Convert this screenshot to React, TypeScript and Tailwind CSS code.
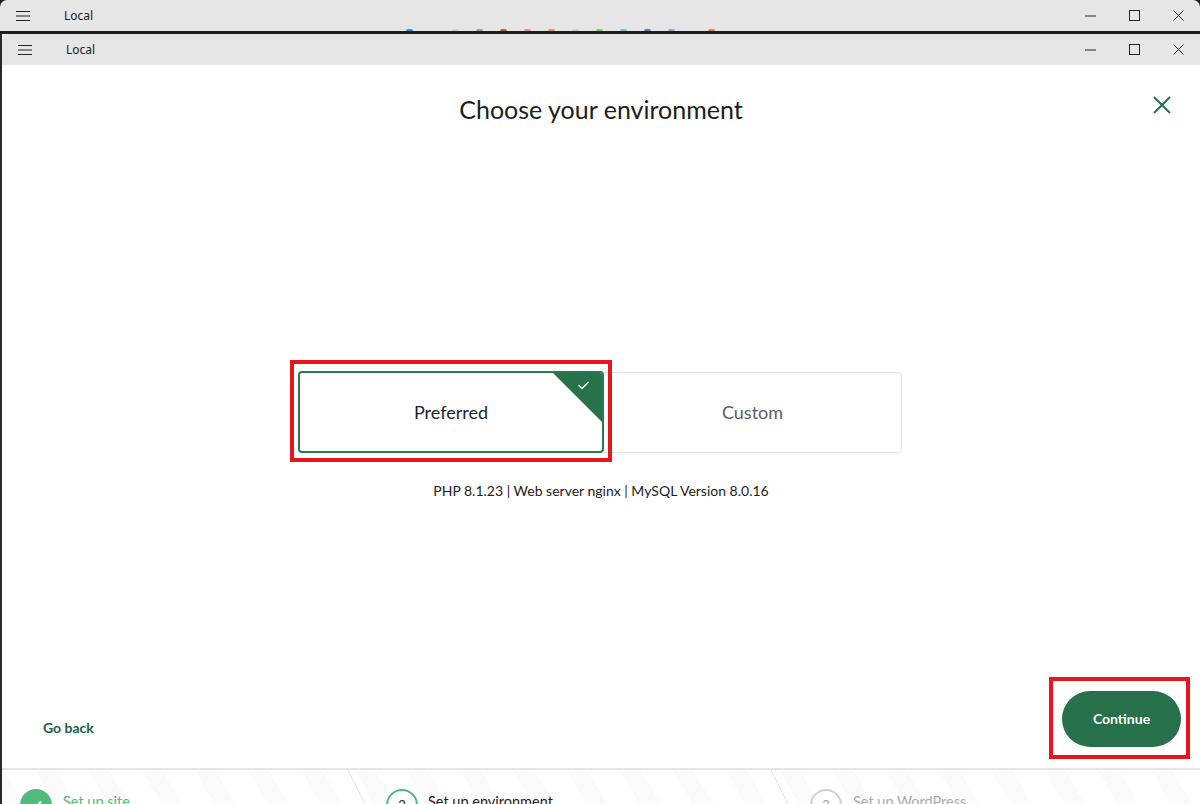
import React from "react";

const GREEN = "#26724a";

function TitleBar({ inner }: { inner?: boolean }) {
  return (
    <div
      className={`flex items-center h-[31px] bg-[#e6e6e6] ${inner ? "rounded-tl-[6px]" : "rounded-t-[7px]"} font-['Noto_Sans',sans-serif]`}
    >
      <div className="w-[44px] flex justify-center pl-[1px]">
        <svg width="14" height="10" viewBox="0 0 14 10">
          <path d="M0 0.5H14M0 5H14M0 9.5H14" stroke="#222" strokeWidth="1" />
        </svg>
      </div>
      <span className="ml-[20px] text-[12px] text-[#1a1a1a]">Local</span>
      <div className="ml-auto flex items-center">
        <div className="w-[44px] flex justify-center">
          <svg width="11" height="11" viewBox="0 0 11 11">
            <path d="M0 6H11" stroke="#222" strokeWidth="1" />
          </svg>
        </div>
        <div className="w-[44px] flex justify-center">
          <svg width="11" height="11" viewBox="0 0 11 11">
            <rect x="0.5" y="0.5" width="10" height="10" fill="none" stroke="#222" strokeWidth="1" />
          </svg>
        </div>
        <div className="w-[44px] flex justify-center">
          <svg width="11" height="11" viewBox="0 0 11 11">
            <path d="M0.5 0.5L10.5 10.5M10.5 0.5L0.5 10.5" stroke="#222" strokeWidth="1" />
          </svg>
        </div>
      </div>
    </div>
  );
}

function Chevron() {
  return (
    <svg className="absolute right-0 top-0" width="22" height="36" viewBox="0 0 22 36">
      <path d="M1 0L19 36" stroke="#e3e3e3" strokeWidth="1" fill="none" />
    </svg>
  );
}

const dots = [
  { x: 406, c: "#3b8fd0" },
  { x: 452, c: "#cfcfcf" },
  { x: 476, c: "#9a9a9a" },
  { x: 500, c: "#a06a4a" },
  { x: 524, c: "#e58bb5" },
  { x: 548, c: "#e0a020" },
  { x: 572, c: "#d8d0a8" },
  { x: 596, c: "#8cc83c" },
  { x: 620, c: "#78c0d0" },
  { x: 644, c: "#5c7fa8" },
  { x: 668, c: "#a8a0d0" },
  { x: 708, c: "#e08040" },
];

export default function App() {
  return (
    <div className="w-[1200px] h-[804px] overflow-hidden flex flex-col bg-[#1e1e1e] font-['Lato',sans-serif]">
      <TitleBar />
      <div className="relative h-[3px] bg-[#1e1e1e]">
        {dots.map((d) => (
          <span
            key={d.x}
            className="absolute top-[-2px] w-[7px] h-[2px] rounded-t-full"
            style={{ left: d.x, backgroundColor: d.c }}
          />
        ))}
      </div>
      <div className="flex-1 flex">
        <div className="w-[2px] bg-[#2a2a2a]" />
        <div className="flex-1 flex flex-col bg-white">
          <TitleBar inner />
          <main className="flex-1 flex flex-col">
            <div className="relative pt-[30px] flex justify-center">
              <h1 className="text-[25px] leading-[28px] text-[#1c1c1c]">
                Choose your environment
              </h1>
              <button className="absolute right-[28px] top-[30px] w-[20px] h-[20px] flex items-center justify-center">
                <svg width="20" height="20" viewBox="0 0 20 20">
                  <path d="M2 2L18 18M18 2L2 18" stroke={GREEN} strokeWidth="2" />
                </svg>
              </button>
            </div>

            <div className="flex-1 flex flex-col items-center pt-[248px]">
              <div className="relative flex ml-[-2px]">
                {/* annotation box */}
                <div className="absolute left-[-8px] top-[-11px] w-[322px] h-[102px] border-4 border-[#e8141f] pointer-events-none" />
                <div className="relative w-[306px] h-[82px] border-2 border-[#2a7a4f] rounded-[4px] flex items-center justify-center overflow-hidden">
                  <span className="text-[18px] text-[#1b2330]">Preferred</span>
                  <svg className="absolute right-0 top-0" width="49" height="49" viewBox="0 0 49 49">
                    <path d="M0 0H49V49Z" fill={GREEN} />
                    <path d="M25.5 12L29 15.5L35.5 9" stroke="#fff" strokeWidth="1.3" fill="none" />
                  </svg>
                </div>
                <div className="w-[298px] h-[81px] mt-[1px] border border-l-0 border-[#e3e3e3] rounded-r-[4px] flex items-center justify-center">
                  <span className="text-[18px] text-[#5c5e5e]">Custom</span>
                </div>
              </div>
              <p className="mt-[28px] text-[14px] leading-[20px] text-[#1c1c1c]">
                PHP 8.1.23 | Web server nginx | MySQL Version 8.0.16
              </p>
            </div>

            <div className="flex items-end justify-between pl-[41px] pr-[19px] pb-[21px]">
              <button className="mb-[9px] text-[14px] leading-[20px] font-bold text-[#205e44]">Go back</button>
              <div className="relative">
                <div className="absolute left-[-13px] top-[-14px] w-[141px] h-[82px] border-4 border-[#e8141f] pointer-events-none" />
                <button className="w-[119px] h-[56px] rounded-full bg-[#26704a] text-white text-[14px] font-bold pb-[1px]">
                  Continue
                </button>
              </div>
            </div>
          </main>

          <footer className="h-[36px] border-t-2 border-[#e5e5e5] overflow-hidden flex bg-[repeating-linear-gradient(60deg,#fafafa_0px,#fafafa_18px,#ffffff_18px,#ffffff_46px)] text-[14.5px] leading-[20px]">
            <div className="relative w-[367px] flex items-start pt-[19px] pl-[18px]">
              <div className="w-[32px] h-[32px] rounded-full bg-[#51bb7b] flex items-center justify-center shrink-0">
                <svg width="14" height="14" viewBox="0 0 14 14">
                  <path d="M2 7L5.5 10.5L12 3.5" stroke="#fff" strokeWidth="2" fill="none" />
                </svg>
              </div>
              <span className="ml-[11px] mt-[3px] text-[#51bb7b]">Set up site</span>
              <Chevron />
            </div>
            <div className="relative w-[423px] flex items-start pt-[19px] pl-[17px]">
              <div className="w-[32px] h-[32px] rounded-full border-2 border-[#51bb7b] flex items-center justify-center shrink-0 text-[#1c1c1c] text-[13px]">
                2
              </div>
              <span className="ml-[10px] mt-[3px] text-[#1c1c1c]">Set up environment</span>
              <Chevron />
            </div>
            <div className="relative flex-1 flex items-start pt-[19px] pl-[18px]">
              <div className="w-[32px] h-[32px] rounded-full border-2 border-[#cfcfcf] flex items-center justify-center shrink-0 text-[#9a9a9a] text-[13px]">
                3
              </div>
              <span className="ml-[11px] mt-[3px] text-[#aaaaaa]">Set up WordPress</span>
            </div>
          </footer>
        </div>
      </div>
    </div>
  );
}
